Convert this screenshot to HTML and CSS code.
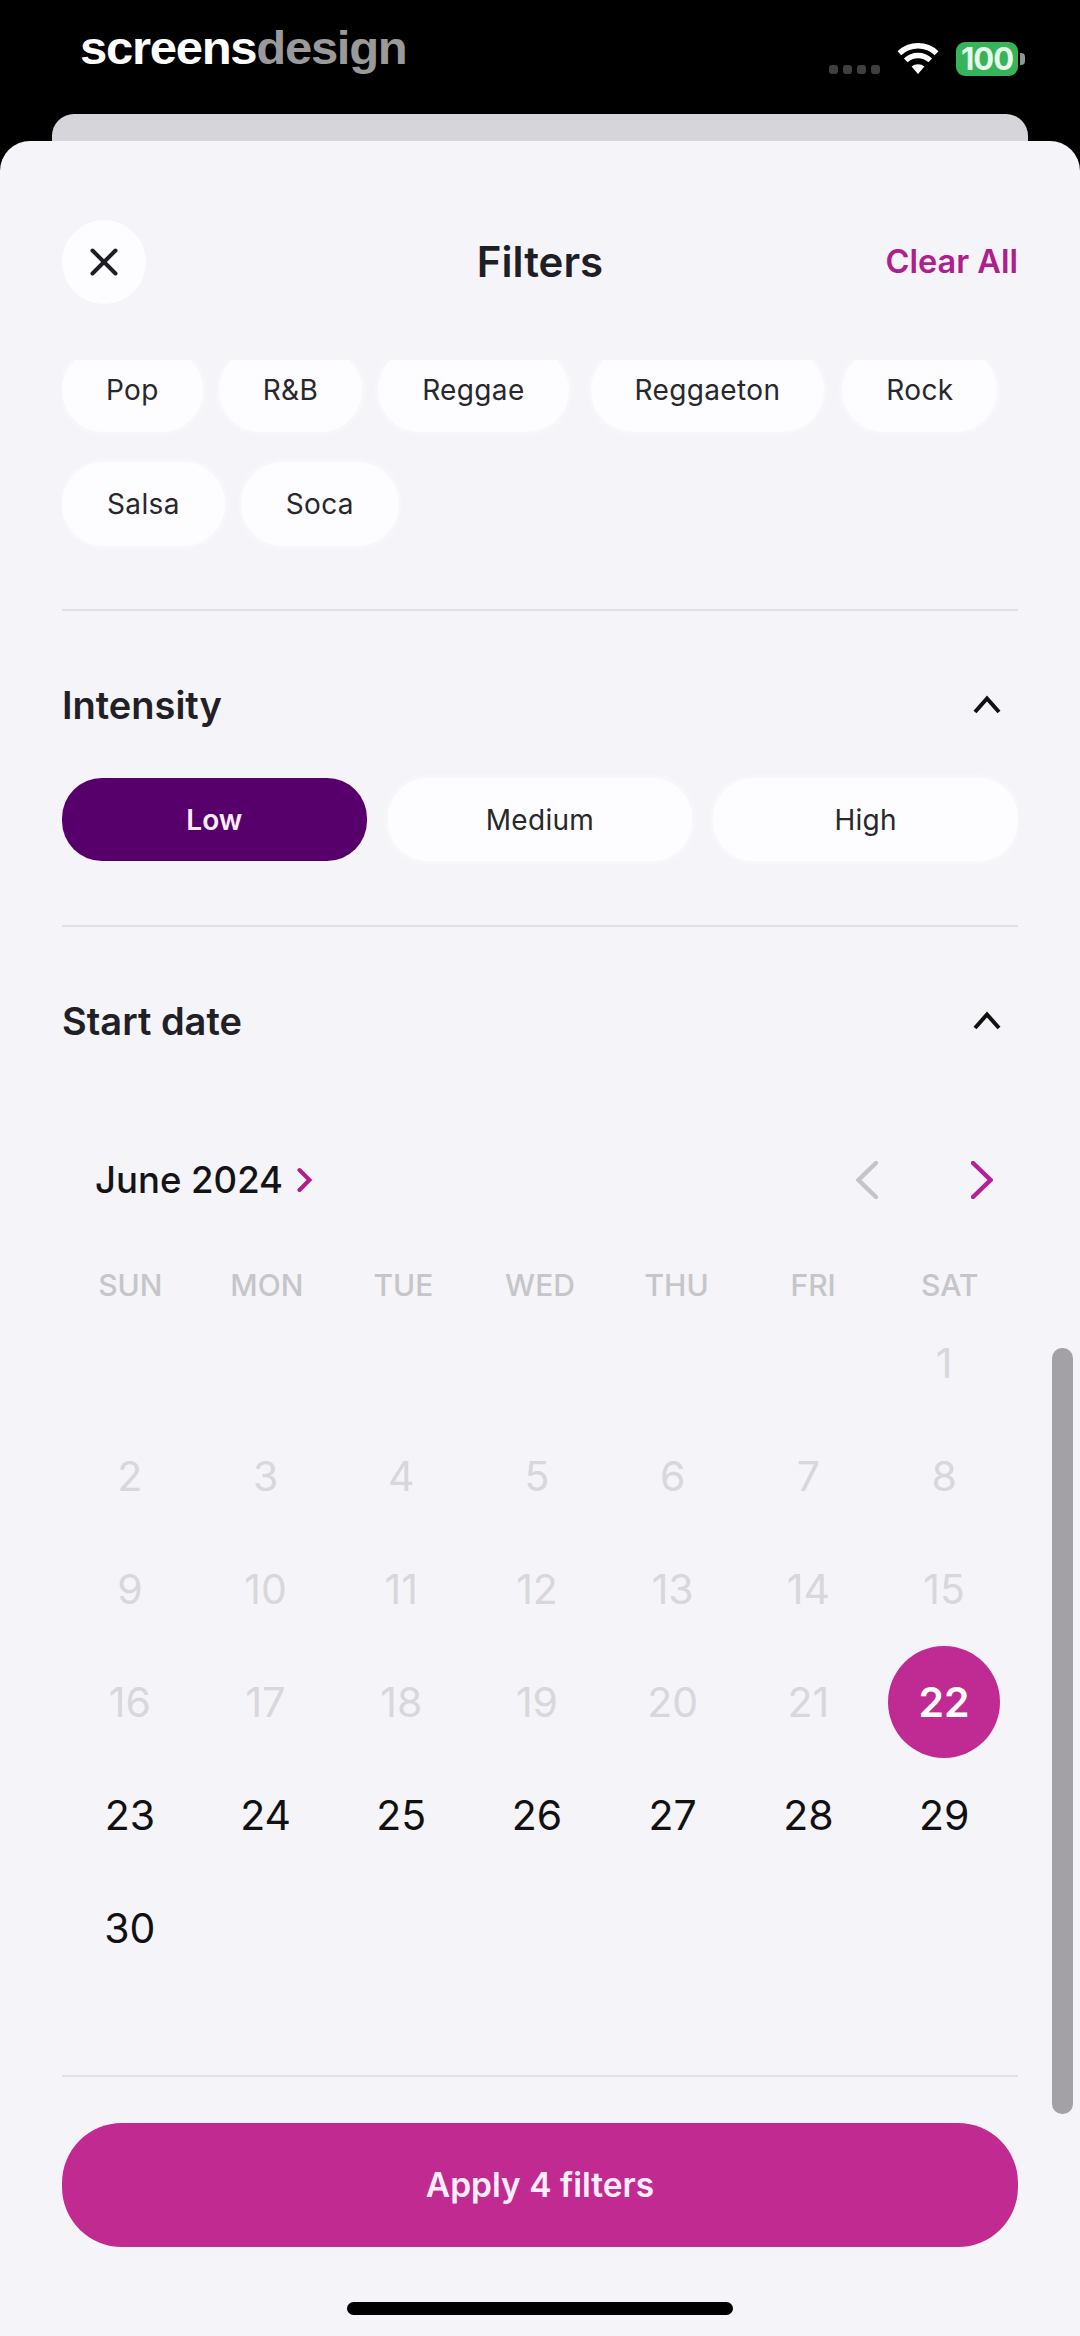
FILE: index.html
```html
<!DOCTYPE html>
<html lang="en">
<head>
<meta charset="utf-8">
<title>Filters</title>
<link rel="stylesheet" href="styles.css">
</head>
<body>
<div class="phone">
  <header class="status">
    <div class="logo"><span class="logo-a">screens</span><span class="logo-b">design</span></div>
    <div class="status-right">
      <div class="cell"><i></i><i></i><i></i><i></i></div>
      <svg class="wifi" viewBox="0 0 42 31"><path d="M21 31 14.6 23.6a9.6 9.6 0 0 1 12.8 0Z" fill="#fff"/><path d="M8.8 17.4a17.6 17.6 0 0 1 24.4 0" fill="none" stroke="#fff" stroke-width="5.4"/><path d="M2.4 10.2a27 27 0 0 1 37.2 0" fill="none" stroke="#fff" stroke-width="5.4"/></svg>
      <div class="battery">100</div>
      <div class="nub"></div>
    </div>
  </header>
  <div class="backcard"></div>
  <main class="sheet">
    <div class="sheet-head">
      <button class="close"><svg viewBox="0 0 30 30" class="close-x"><path d="M3.5 3.5 26.5 26.5M26.5 3.5 3.5 26.5"/></svg></button>
      <h1 class="title">Filters</h1>
      <a class="clear">Clear All</a>
    </div>
    <div class="scroll">
      <section class="genres">
        <span class="pill">Pop</span><span class="pill">R&amp;B</span><span class="pill">Reggae</span><span class="pill pill-long">Reggaeton</span><span class="pill pill-end">Rock</span><span class="pill pill-wide">Salsa</span><span class="pill pill-wide">Soca</span>
      </section>
      <hr class="rule">
      <section class="section">
        <div class="sec-head"><h2>Intensity</h2><svg class="chev" viewBox="0 0 30 20"><path d="M3 17 15 3.5 27 17"/></svg></div>
        <div class="segments">
          <span class="seg on">Low</span><span class="seg">Medium</span><span class="seg">High</span>
        </div>
      </section>
      <hr class="rule">
      <section class="section">
        <div class="sec-head"><h2>Start date</h2><svg class="chev" viewBox="0 0 30 20"><path d="M3 17 15 3.5 27 17"/></svg></div>
      </section>
      <section class="cal">
        <div class="cal-head">
          <div class="month">June 2024<svg class="month-chev" viewBox="0 0 16 26"><path d="M2.5 3 12.5 13 2.5 23"/></svg></div>
          <div class="cal-nav">
            <svg class="nav prev" viewBox="0 0 22 38"><path d="M20 2 2.5 19 20 36"/></svg>
            <svg class="nav next" viewBox="0 0 22 38"><path d="M2 2 19.5 19 2 36"/></svg>
          </div>
        </div>
        <div class="weekdays"><span>SUN</span><span>MON</span><span>TUE</span><span>WED</span><span>THU</span><span>FRI</span><span>SAT</span></div>
        <div class="days">
          <span class="off s7">1</span>
          <span class="off">2</span><span class="off">3</span><span class="off">4</span><span class="off">5</span><span class="off">6</span><span class="off">7</span><span class="off">8</span>
          <span class="off">9</span><span class="off">10</span><span class="off">11</span><span class="off">12</span><span class="off">13</span><span class="off">14</span><span class="off">15</span>
          <span class="off">16</span><span class="off">17</span><span class="off">18</span><span class="off">19</span><span class="off">20</span><span class="off">21</span><span class="sel"><b>22</b></span>
          <span>23</span><span>24</span><span>25</span><span>26</span><span>27</span><span>28</span><span>29</span>
          <span>30</span>
        </div>
      </section>
    </div>
    <footer class="foot">
      <hr class="rule">
      <button class="apply">Apply 4 filters</button>
      <div class="homebar"></div>
    </footer>
    <div class="scrollbar"></div>
  </main>
</div>
</body>
</html>
```

FILE: styles.css
```css
* { box-sizing: border-box; }
html, body { margin: 0; padding: 0; background: #000; }
body { font-family: Inter, "Liberation Sans", sans-serif; color: #1f1e24; }
.phone { width: 1080px; height: 2336px; display: flex; flex-direction: column; overflow: hidden; background: #000; }

.status { height: 114px; flex: none; display: flex; justify-content: space-between; padding: 23px 55px 0 80px; }
.logo { font-family: "Liberation Sans", Arial, sans-serif; font-weight: 700; font-size: 46px; line-height: 50px; letter-spacing: -1.2px; transform-origin: left center; transform: scaleX(1.065); height: 50px; }
.logo-a { color: #fff; }
.logo-b { color: #9a9a9a; }
.status-right { display: flex; align-items: flex-start; padding-top: 19px; }
.cell { display: flex; gap: 5px; margin-top: 23px; margin-right: 17px; }
.cell i { width: 9px; height: 9px; border-radius: 3px; background: #3f3f3f; }
.wifi { width: 42px; height: 31px; margin-top: 1px; margin-right: 17px; }
.battery { width: 62px; height: 34px; border-radius: 9px; background: #37b35a; color: #e6f8ea; font-size: 31px; font-weight: 700; line-height: 34px; text-align: center; letter-spacing: -1px; }
.nub { width: 5px; height: 12px; margin-top: 11px; margin-left: 2px; background: #8d9a90; border-radius: 0 4px 4px 0; }

.backcard { flex: none; height: 27px; margin: 0 52px; background: #d6d5d9; border-radius: 22px 22px 0 0; }

.sheet { flex: 1; position: relative; display: flex; flex-direction: column; background: #f5f4f8; border-radius: 30px 30px 0 0; padding: 79px 62px 0; }
.sheet-head { flex: none; display: grid; grid-template-columns: 1fr auto 1fr; align-items: center; height: 84px; margin-bottom: 56px; }
.close { width: 84px; height: 84px; border: 0; padding: 0; border-radius: 50%; background: #fdfcfe; display: flex; align-items: center; justify-content: center; }
.close-x { width: 30px; height: 30px; fill: none; stroke: #1f1e24; stroke-width: 4; stroke-linecap: round; }
.title { margin: 0; font-size: 42px; font-weight: 600; line-height: 50px; color: #1f1e26; }
.clear { justify-self: end; font-size: 32.5px; font-weight: 600; color: #ae1f8d; margin-top: -2px; }

.scroll { flex: 1; min-height: 0; overflow: hidden; }
.genres { display: flex; flex-wrap: wrap; gap: 30px 16px; margin-top: -12px; padding-bottom: 63px; }
.pill { height: 84px; padding: 0 44px; display: flex; align-items: center; border-radius: 42px; background: #fdfcfe; box-shadow: 0 0 6px #fdfcfe; font-size: 28px; letter-spacing: 0.35px; color: #28272c; }
.pill-long { margin-left: 6px; }
.pill-end { margin-left: 2px; }
.pill-wide { padding: 0 45px; }
.rule { margin: 0; height: 2px; border: 0; background: #e1e0e4; flex: none; }

.section { display: block; }
.sec-head { height: 40px; margin-top: 75px; display: flex; justify-content: space-between; align-items: center; padding-right: 16px; }
.sec-head h2 { margin: -3px 0 0; font-size: 38px; font-weight: 600; line-height: 40px; color: #202026; }
.chev { width: 30px; height: 20px; margin-top: -3px; fill: none; stroke: #111; stroke-width: 4; }
.segments { margin-top: 52px; padding-bottom: 64px; display: grid; grid-template-columns: repeat(3, 1fr); gap: 21px; }
.seg { height: 83px; border-radius: 40px; display: flex; align-items: center; justify-content: center; background: #fdfcfe; box-shadow: 0 0 6px #fdfcfe; font-size: 28px; letter-spacing: 0.3px; color: #28272c; }
.seg.on { background: #57006c; box-shadow: none; color: #fdeefd; font-weight: 600; letter-spacing: 0; }

.cal-head { height: 60px; margin-top: 108px; padding: 0 25px 0 33px; display: flex; justify-content: space-between; align-items: center; }
.month { display: flex; align-items: center; gap: 14px; font-size: 36.5px; font-weight: 500; color: #141318; }
.month-chev { width: 16px; height: 26px; fill: none; stroke: #ae1f8d; stroke-width: 4; stroke-linecap: round; }
.cal-nav { display: flex; gap: 93px; }
.nav { width: 22px; height: 38px; fill: none; stroke-width: 4.4; stroke-linecap: round; }
.prev { stroke: #c5c4c8; }
.next { stroke: #b3219a; }
.weekdays { margin-top: 55px; display: grid; grid-template-columns: repeat(7, 1fr); height: 40px; align-items: center; text-align: center; font-size: 30px; font-weight: 500; color: #c6c5c9; }
.days { width: 950px; margin-top: 1px; display: grid; grid-template-columns: repeat(7, 1fr); grid-auto-rows: 113px; font-size: 41px; color: #111; }
.days span { display: flex; align-items: center; justify-content: center; }
.days .off { color: #d8d7db; }
.days .s7 { grid-column: 7; }
.days .sel b { width: 112px; height: 112px; border-radius: 50%; background: #c02a93; color: #fff; font-weight: 600; display: flex; align-items: center; justify-content: center; }

.foot { flex: none; height: 261px; }
.apply { display: block; width: 100%; height: 124px; margin-top: 46px; border: 0; border-radius: 60px; background: #c12b91; color: #fdeefd; font-family: inherit; font-size: 33.5px; font-weight: 600; }
.homebar { width: 386px; height: 13px; margin: 55px auto 0; border-radius: 7px; background: #000; }
.scrollbar { position: absolute; right: 7px; top: 1207px; width: 21px; height: 766px; border-radius: 10px; background: #a3a1a6; }
```
